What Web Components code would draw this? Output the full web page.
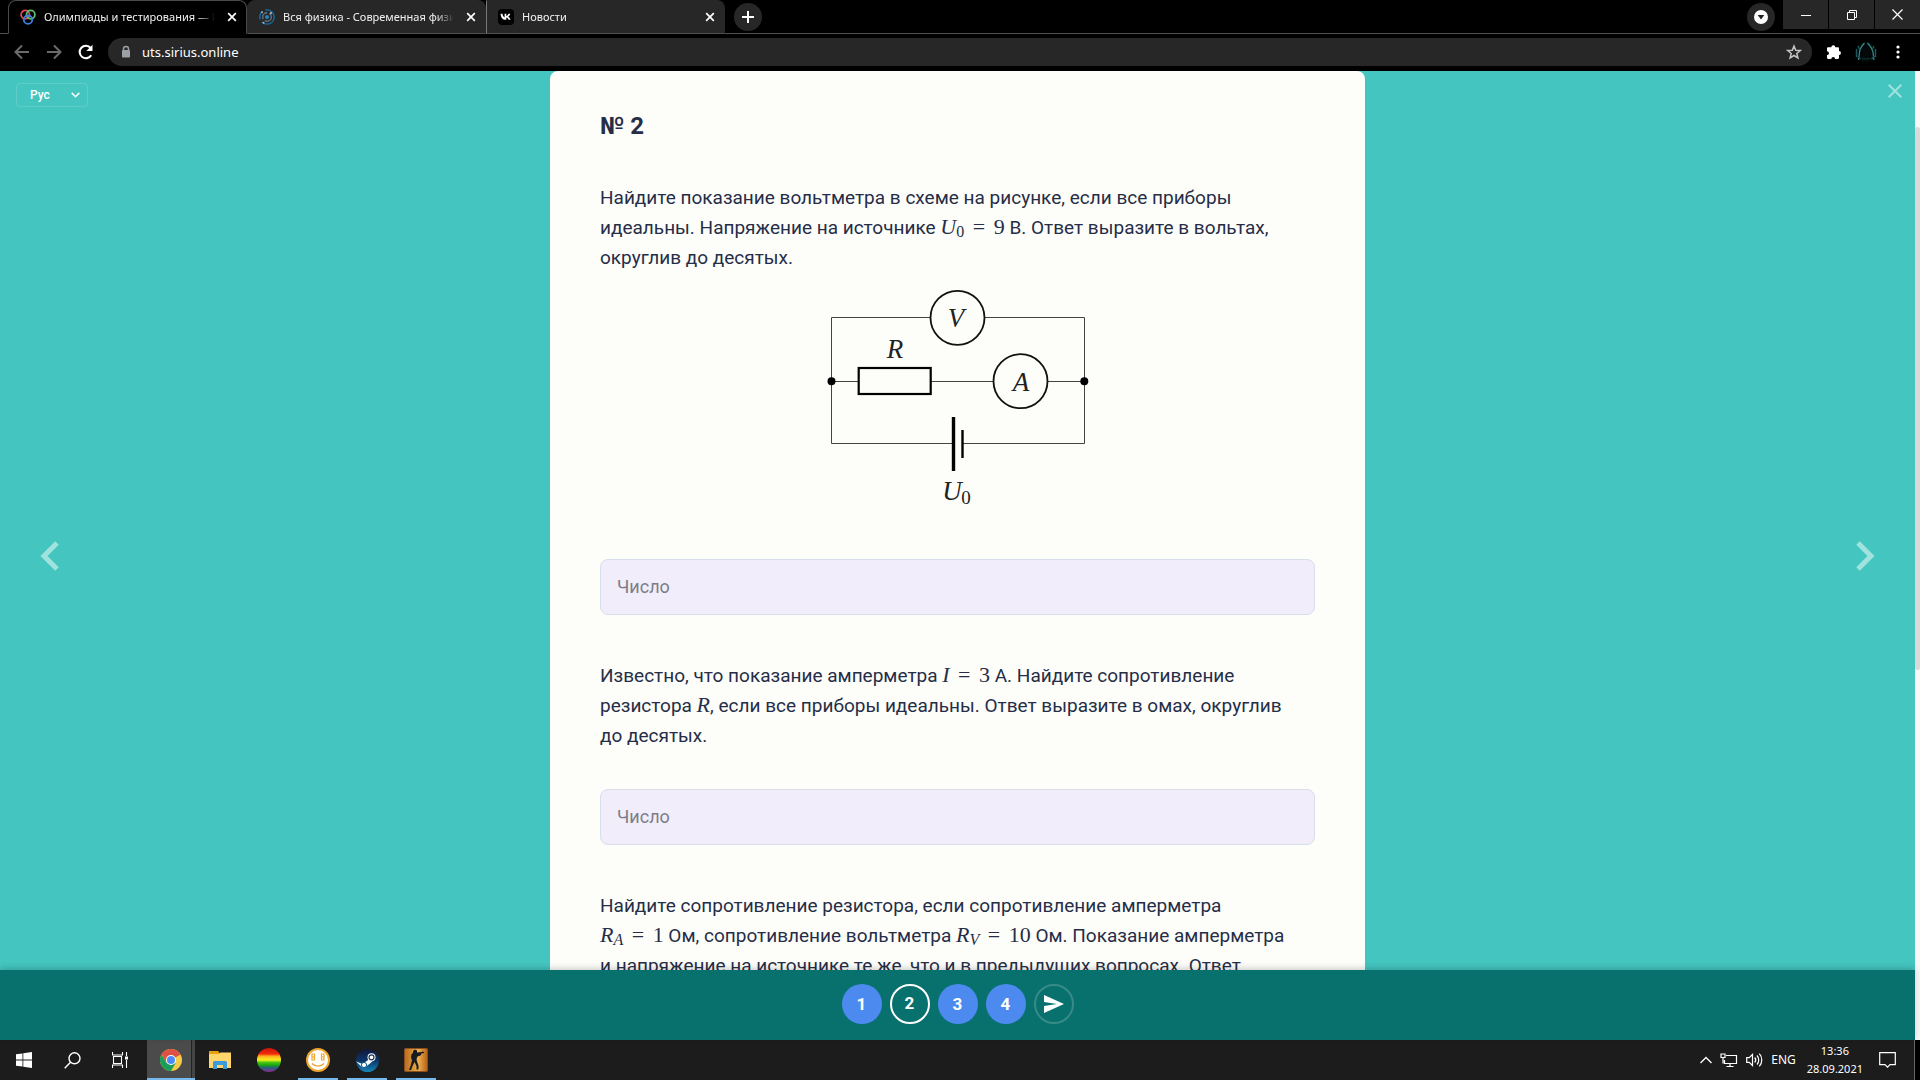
<!DOCTYPE html>
<html lang="ru">
<head>
<meta charset="utf-8">
<title>Олимпиады и тестирования</title>
<style>
html, body { height: 100%; margin: 0; }
body { background: #000; font-family: Roboto, "Liberation Sans", sans-serif; overflow: hidden; }
</style>
</head>
<body>
<desktop-shell></desktop-shell>
<script>
const define = (name, css, html) => {
  const template = document.createElement('template');
  template.innerHTML = `<style>*,*::before,*::after{box-sizing:border-box}button{font:inherit;color:inherit;border:0;padding:0;margin:0;background:none;display:flex;align-items:center;justify-content:center}svg{display:block;flex:none}${css}</style>${html}`;
  customElements.define(name, class extends HTMLElement {
    constructor() {
      super();
      this.attachShadow({ mode: 'open' }).append(template.content.cloneNode(true));
    }
  });
};

/* ---------- browser window ---------- */
define('browser-tab', `
  :host { display: flex; align-items: center; gap: 8px; flex: 0 1 239px; min-width: 0; height: 34px; padding: 0 6px 0 11px; background: #272727; border-radius: 8px 8px 0 0; color: #f1f1f1; font: 11px/16px "Noto Sans", "Open Sans", sans-serif; border: 1px solid #272727; border-bottom: 1px solid #505050; }
  :host([active]) { background: #000; border-color: #4a4a4a; border-bottom-color: #000; }
  :host([divided]) { border-top-left-radius: 0; border-left-color: #777; }
  .title { flex: 1; min-width: 0; overflow: hidden; white-space: nowrap; -webkit-mask-image: linear-gradient(to right, #000 calc(100% - 22px), transparent calc(100% - 4px)); }
  button { width: 16px; height: 16px; margin-left: -3px; }
`, `<slot name="icon"></slot><span class="title"><slot></slot></span>
  <button aria-label="Закрыть вкладку"><svg width="10" height="10" viewBox="0 0 10 10" fill="none" stroke="#fff" stroke-width="1.7"><path d="M1.2 1.2l7.6 7.6M8.8 1.2L1.2 8.8"/></svg></button>`);

define('tab-strip', `
  :host { display: flex; height: 34px; background: #000; border-bottom: 1px solid #505050; padding-left: 8px; }
  .tabs { display: flex; flex: 0 1 718px; min-width: 0; }
  .round { width: 28px; height: 28px; border-radius: 50%; background: #272727; margin: 3px 8px; flex: none; }
  .fill { flex: 1; }
  .window { display: flex; gap: 1px; }
  .window button { width: 45px; height: 29px; background: #272727; }
`, `
  <div class="tabs">
    <browser-tab active>
      <svg slot="icon" width="16" height="16" viewBox="0 0 16 16" fill="none" stroke-width="1.8"><circle cx="5.3" cy="5.6" r="4.2" stroke="#e8475a"/><circle cx="10.7" cy="5.6" r="4.2" stroke="#5ec26a"/><circle cx="8" cy="10.7" r="4.2" stroke="#3f7fe0"/></svg>
      Олимпиады и тестирования — Р</browser-tab>
    <browser-tab>
      <svg slot="icon" width="16" height="16" viewBox="0 0 16 16" fill="none"><circle cx="8" cy="8" r="7.2" stroke="#1670ab" stroke-width="1.3" stroke-dasharray="17 3 9 3"/><circle cx="8" cy="8" r="4.3" stroke="#667180" stroke-width="1.4" stroke-dasharray="9 2"/><circle cx="8" cy="8" r="2" fill="#1f87c4"/><circle cx="3" cy="3.2" r="1" fill="#aaa"/><circle cx="12" cy="4" r="1" fill="#ccc"/><circle cx="4.5" cy="13.8" r="1" fill="#aaa"/></svg>
      Вся физика - Современная физи</browser-tab>
    <browser-tab divided>
      <svg slot="icon" width="16" height="16" viewBox="0 0 16 16"><rect width="16" height="16" rx="4" fill="#000"/><path d="M2.6 4.7h1.8c.3 2.3 1.4 3.4 2.2 3.7v-3.7h1.7v2.2c.9-.1 1.8-1 2.2-2.2h1.8c-.3 1.4-1.2 2.5-2.1 3 .9.5 1.9 1.4 2.4 3.1h-1.9c-.4-1.2-1.3-2.2-2.4-2.3v2.3h-.3c-3.400 0-5.300-2.300-5.400-6.100z" fill="#fff"/></svg>
      Новости</browser-tab>
  </div>
  <button class="round" aria-label="Новая вкладка"><svg width="12" height="12" viewBox="0 0 12 12" stroke="#fff" stroke-width="2"><path d="M6 0v12M0 6h12"/></svg></button>
  <span class="fill"></span>
  <button class="round" aria-label="Поиск вкладок"><svg width="14" height="14" viewBox="0 0 14 14"><circle cx="7" cy="7" r="7" fill="#fff"/><path d="M3.7 5h6.600L7 9.500z" fill="#202020"/></svg></button>
  <div class="window">
    <button aria-label="Свернуть"><svg width="10" height="10" stroke="#fff"><path d="M0 5.500h10"/></svg></button>
    <button aria-label="Восстановить"><svg width="10" height="10" fill="none" stroke="#fff"><path d="M.5 2.500h7v7h-7zM2.500 2.500v-2h7v7h-2"/></svg></button>
    <button aria-label="Закрыть"><svg width="11" height="11" fill="none" stroke="#fff" stroke-width="1.200"><path d="M.5 .5l10 10M10.500 .5l-10 10"/></svg></button>
  </div>`);

define('browser-toolbar', `
  :host { display: flex; align-items: center; gap: 4px; height: 37px; padding: 0 8px 1px; background: #000; }
  button { width: 28px; height: 28px; flex: none; }
  .address { display: flex; flex: 1; min-width: 0; align-items: center; height: 28px; margin: 0 4px; padding: 0 4px 0 12px; border-radius: 14px; background: #272727; }
  input { flex: 1; min-width: 0; border: 0; outline: 0; background: none; padding: 0 0 0 10px; color: #fff; font: 13px/20px "Noto Sans", "Open Sans", sans-serif; }
`, `
  <button aria-label="Назад"><svg width="16" height="16" fill="none" stroke="#6b6b6b" stroke-width="2"><path d="M15 8H2M8 1.500L1.500 8 8 14.500"/></svg></button>
  <button aria-label="Вперёд"><svg width="16" height="16" fill="none" stroke="#6b6b6b" stroke-width="2"><path d="M1 8h13M8 1.500L14.500 8 8 14.500"/></svg></button>
  <button aria-label="Обновить"><svg width="16" height="16" fill="none"><path d="M13.200 11.200A6.200 6.200 0 1 1 12.600 4" stroke="#fff" stroke-width="2.100"/><path d="M14.500 .8v6.200H8.300z" fill="#fff"/></svg></button>
  <div class="address">
    <svg width="12" height="14" viewBox="0 0 12 14"><path d="M3.500 6V4a2.500 2.500 0 0 1 5 0v2" fill="none" stroke="#9aa0a6" stroke-width="1.500"/><rect x="2" y="5" width="8" height="7.500" rx="1" fill="#9aa0a6"/></svg>
    <input aria-label="Адрес" value="uts.sirius.online">
    <button aria-label="В закладки"><svg width="16" height="16" viewBox="0 0 16 16" fill="none" stroke="#c4c4c4" stroke-width="1.500"><path d="M8 2l1.700 4.200 4.600.3-3.500 3 1.100 4.400L8 11.500l-3.900 2.400 1.100-4.400-3.500-3 4.600-.3z"/></svg></button>
  </div>
  <button aria-label="Расширения"><svg width="16" height="16" viewBox="0 0 16 16" fill="#fff"><path d="M5.300 3.200a2 2 0 0 1 4 0h2.500c.7 0 1.200.5 1.200 1.200V7a1.900 1.900 0 0 1 0 3.900v2.900c0 .7-.5 1.200-1.200 1.200H9.100a1.900 1.900 0 0 0-3.800 0H2.200c-.7 0-1.200-.5-1.200-1.200v-2.700a1.900 1.900 0 0 0 0-3.900V4.400c0-.7.5-1.200 1.200-1.200z"/></svg></button>
  <button aria-label="Профиль"><svg width="22" height="22" viewBox="0 0 22 22" fill="none"><circle cx="11" cy="11" r="10.500" fill="#030909"/><path d="M9.500 2C7 4.500 4.800 8 4.400 12L3.500 19M12.500 2c2.500 2.500 5 6 5.600 10l.9 7" stroke="#3b8e93" stroke-width="1.200"/><path d="M1.500 8v8M3 5l2 4M20.500 8v8M19 5l-2 4M2.500 16l3 2M19.500 15l-3 3" stroke="#1d5a5d" stroke-width="1.400"/><path d="M7 17.500c2.500.6 5.500.6 8 0" stroke="#123a3c"/></svg></button>
  <button aria-label="Меню"><svg width="4" height="14" fill="#fff"><circle cx="2" cy="2" r="1.600"/><circle cx="2" cy="7" r="1.600"/><circle cx="2" cy="12" r="1.600"/></svg></button>`);

/* ---------- test page ---------- */
define('math-expr', `
  :host { white-space: nowrap; font: 22px/22px "Liberation Serif", serif; }
  ::slotted(sub) { font-size: 16px; line-height: 16px; vertical-align: -3px; }
  ::slotted(.eq) { margin: 0 3px; }
`, `<slot></slot>`);

define('circuit-diagram', `
  :host { display: flex; justify-content: center; }
  text { font: italic 27px "Liberation Serif", serif; fill: #222; text-anchor: middle; }
  .index { font: 19px "Liberation Serif", serif; }
`, `
  <svg width="301" height="248" viewBox="0 1 301 248" fill="none" stroke="#111" role="img" aria-label="Схема электрической цепи">
    <path stroke="#444" d="M24.500 45.500h253v126h-253zM24.500 109.500h253"/>
    <circle cx="150.500" cy="45.800" r="27" fill="#fdfefa" stroke-width="1.800"/>
    <circle cx="213.500" cy="109.200" r="27" fill="#fdfefa" stroke-width="1.800"/>
    <rect x="51.700" y="96" width="72" height="26" fill="#fdfefa" stroke="#000" stroke-width="2.200"/>
    <circle cx="24.500" cy="109.200" r="4" fill="#000" stroke="none"/><circle cx="277.300" cy="109.200" r="4" fill="#000" stroke="none"/>
    <path stroke="#fdfefa" stroke-width="3" d="M147.500 171.500h8"/>
    <path stroke="#000" stroke-width="3.400" d="M146.500 145v54"/><path stroke="#000" stroke-width="2.400" d="M155.500 158v28"/>
    <g stroke="none"><text x="149" y="55">V</text><text x="88" y="86">R</text><text x="214" y="119">A</text><text x="145" y="228">U</text><text class="index" x="159" y="232">0</text></g>
  </svg>`);

define('answer-field', `
  :host { display: block; }
  input { display: block; width: 100%; height: 56px; padding: 0 16px 2px; border: 1px solid #d8deea; border-radius: 8px; background: #f1edfb; color: #262d47; font: 18px/24px Roboto, sans-serif; outline: 0; }
  input::placeholder { color: #7d7d85; opacity: 1; }
`, `<input type="text" inputmode="decimal" placeholder="Число" aria-label="Ответ">`);

define('task-question', `
  :host { display: flex; flex-direction: column; gap: 38px; }
  p { margin: 0; padding-right: 16px; font-size: 19px; line-height: 30px; color: #262d47; }
`, `<div><p><slot></slot></p><slot name="figure"></slot></div><slot name="answer"></slot>`);

define('task-card', `
  :host { display: flex; flex-direction: column; gap: 46px; padding: 40px 50px; background: #fdfefa; border-radius: 8px 8px 0 0; }
  h1 { margin: 0 0 -4px; font-size: 24px; line-height: 30px; font-weight: 700; color: #262d47; }
`, `
  <h1>№ 2</h1>
  <task-question>Найдите показание вольтметра в схеме на рисунке, если все приборы идеальны. Напряжение на источнике <math-expr><i>U</i><sub>0</sub> <span class="eq">=</span> 9</math-expr> В. Ответ выразите в вольтах, округлив до десятых.
    <circuit-diagram slot="figure"></circuit-diagram><answer-field slot="answer"></answer-field></task-question>
  <task-question>Известно, что показание амперметра <math-expr><i>I</i> <span class="eq">=</span> 3</math-expr> А. Найдите сопротивление резистора <math-expr><i>R</i></math-expr>, если все приборы идеальны. Ответ выразите в омах, округлив до десятых.
    <answer-field slot="answer"></answer-field></task-question>
  <task-question>Найдите сопротивление резистора, если сопротивление амперметра <math-expr><i>R</i><sub><i>A</i></sub> <span class="eq">=</span> 1</math-expr>&nbsp;Ом, сопротивление вольтметра <math-expr><i>R</i><sub><i>V</i></sub> <span class="eq">=</span> 10</math-expr>&nbsp;Ом. Показание амперметра и&nbsp;напряжение на источнике те же, что и в предыдущих вопросах. Ответ</task-question>`);

define('language-select', `
  :host { display: flex; align-items: center; width: 72px; height: 24px; border: 1px solid rgba(255,255,255,.14); border-radius: 4px; }
  select { appearance: none; flex: 1; min-width: 0; height: 22px; border: 0; background: none; padding: 0 0 0 13px; color: #fff; font: 500 12px/16px Roboto, sans-serif; outline: 0; }
  svg { margin-right: 7px; pointer-events: none; }
`, `<select aria-label="Язык"><option>Рус</option></select><svg width="9" height="6" fill="none" stroke="#fff" stroke-width="1.500"><path d="M.7 .9l3.800 3.800L8.300 .9"/></svg>`);

define('task-nav', `
  :host { display: flex; justify-content: center; gap: 8px; height: 70px; padding-top: 14px; background: #08716d; box-shadow: 0 -2px 6px rgba(0,0,0,.18); position: relative; }
  button { width: 40px; height: 40px; border-radius: 50%; background: #4d8af0; color: #fff; font: 700 17px/20px Roboto, sans-serif; }
  button[aria-current] { background: none; border: 2px solid #fff; padding-bottom: 2px; }
  .send { background: none; border: 2px solid #378b87; }
`, `
  <button>1</button><button aria-current="page">2</button><button>3</button><button>4</button>
  <button class="send" aria-label="Отправить"><svg width="20" height="18" fill="#fff"><path d="M0 0l20 9L0 18v-7l13-2L0 7z"/></svg></button>`);

define('test-page', `
  :host { display: flex; flex: 1; min-height: 0; background: #f8f8f8; }
  .view { position: relative; display: flex; flex-direction: column; flex: 1; min-width: 0; background: #44c5c0; }
  .stage { display: grid; grid-template-columns: 1fr minmax(0, 815px) 1fr; flex: 1; min-height: 0; overflow: hidden; }
  .side { display: flex; flex-direction: column; justify-content: space-between; align-items: flex-start; padding: 12px 16px 8px; }
  .side.right { align-items: flex-end; padding: 13px 13px 0 0; }
  time { color: #fff; font-size: 18px; line-height: 24px; font-weight: 500; text-shadow: 0 1px 6px rgba(0,0,0,.4); white-space: nowrap; }
  .arrow { position: absolute; top: 50%; margin-top: -15px; }
  .prev { left: 40px; } .next { right: 40px; }
  .scroll { width: 5px; padding-top: 56px; }
  .thumb { height: 543px; border-radius: 3px; background: #d9d9d9; }
`, `
  <div class="view">
    <div class="stage">
      <div class="side"><language-select></language-select><time>00 ч 35 мин</time></div>
      <task-card></task-card>
      <div class="side right"><button aria-label="Закрыть"><svg width="14" height="14" stroke="#a1e2df" stroke-width="2"><path d="M.7 .7l12.600 12.600M13.300 .7L.7 13.300"/></svg></button></div>
    </div>
    <task-nav></task-nav>
    <button class="arrow prev" aria-label="Предыдущее"><svg width="19" height="30" fill="none" stroke="#a1e2df" stroke-width="5"><path d="M17 2L4 15l13 13"/></svg></button>
    <button class="arrow next" aria-label="Следующее"><svg width="19" height="30" fill="none" stroke="#a1e2df" stroke-width="5"><path d="M2 2l13 13L2 28"/></svg></button>
  </div>
  <div class="scroll"><div class="thumb"></div></div>`);

/* ---------- taskbar ---------- */
define('taskbar-app', `
  :host { display: flex; flex: 0 0 48px; height: 40px; }
  button { width: 48px; height: 40px; }
  :host([running]) button { background: linear-gradient(#76b9ed, #76b9ed) center bottom / 40px 2px no-repeat; }
  :host([active]) button { background: linear-gradient(#76b9ed, #76b9ed) center bottom / 48px 2px no-repeat, linear-gradient(to right, #4b4b4b 44px, #242424 44px, #242424 45px, #444 45px); }
`, `<button><slot></slot></button>`);

define('system-taskbar', `
  :host { display: flex; align-items: center; height: 40px; padding-right: 5px; background: #000; color: #fff; font: 11px/18px "Noto Sans", "Open Sans", sans-serif; }
  .bar { display: flex; flex: 1; min-width: 0; height: 40px; align-items: center; background: #1c1c1c; border-right: 1px solid #666; }
  .system { display: flex; padding-right: 3px; }
  .apps { display: flex; gap: 1px; }
  .fill { flex: 1; }
  .tray { display: flex; align-items: center; gap: 8px; padding-right: 18px; }
  .lang { padding-right: 3px; font-size: 12px; }
  .clock { text-align: center; padding-right: 8px; }
`, `
  <div class="bar">
    <div class="system">
      <taskbar-app aria-label="Пуск"><svg width="16" height="16" fill="#fff"><path d="M0 2.300L6.500 1.400v6.200H0zM7.300 1.300L16 0v7.600H7.300zM0 8.400h6.500v6.200L0 13.700zM7.300 8.400H16V16l-8.700-1.300z"/></svg></taskbar-app>
      <taskbar-app aria-label="Поиск"><svg width="17" height="17" fill="none" stroke="#fff" stroke-width="1.400"><circle cx="10.500" cy="6.300" r="5.500"/><path d="M6.500 10.300L.7 16.200"/></svg></taskbar-app>
      <taskbar-app aria-label="Представление задач"><svg width="17" height="16" fill="none" stroke="#fff" stroke-width="1.100"><path d="M.5 0v3h10V0M.5 16v-3h10v3M1.500 4.500h8v7h-8zM14.500 0v4M14.500 8v8"/><path d="M13 4.500h3v3h-3z" fill="#fff" stroke="none"/></svg></taskbar-app>
    </div>
    <div class="apps">
      <taskbar-app active aria-label="Chrome"><svg width="22" height="22" viewBox="0 0 24 24"><circle cx="12" cy="12" r="12" fill="#f7cb4a"/><path d="M12 12L1.600 6A12 12 0 0 1 22.400 6z" fill="#dd5144"/><path d="M12 6h10.400L12 7zM1.600 6l5.200 9L12 12z" fill="#dd5144"/><path d="M1.600 6A12 12 0 0 0 12 24l5.200-9L12 16l-5.200-1z" fill="#1c9e5b"/><circle cx="12" cy="12" r="5.500" fill="#fff"/><circle cx="12" cy="12" r="4.400" fill="#4c8bf5"/></svg></taskbar-app>
      <taskbar-app aria-label="Проводник"><svg width="22" height="18" viewBox="0 0 22 18"><path d="M0 0h9l1.500 2H22v15H0z" fill="#e7a210"/><path d="M0 3h10l1.500-1.500H22V17H0z" fill="#ffd66b"/><path d="M4 18v-7l1-1h12l1 1v7h-4v-4H8v4z" fill="#3c9adf"/></svg></taskbar-app>
      <taskbar-app aria-label="Радуга"><svg width="24" height="24"><defs><linearGradient id="r" x2="0" y2="1"><stop stop-color="#c91408"/><stop offset=".25" stop-color="#f22c0c"/><stop offset=".34" stop-color="#ffae20"/><stop offset=".5" stop-color="#f8f01c"/><stop offset=".6" stop-color="#4bc814"/><stop offset=".72" stop-color="#1aa30e"/><stop offset=".82" stop-color="#256080"/><stop offset="1" stop-color="#8a2a8c"/></linearGradient></defs><circle cx="12" cy="12" r="12" fill="url(#r)"/></svg></taskbar-app>
      <taskbar-app running aria-label="Смайл"><svg width="24" height="24" fill="none" stroke="#eda52e"><circle cx="12" cy="12" r="11" fill="#fff" stroke-width="2"/><path d="M6 6h2.500v6H6zM6 9h2.500M15.500 6H18v6h-2.500zM15.500 9H18" stroke-width="1.200"/><path d="M6 15.500c3.300 3.500 8.700 3.500 12 0" stroke-width="1.400"/></svg></taskbar-app>
      <taskbar-app running aria-label="Steam"><svg width="23" height="23"><defs><linearGradient id="s" x2="0" y2="1"><stop stop-color="#13183b"/><stop offset=".5" stop-color="#0c3467"/><stop offset="1" stop-color="#1387b8"/></linearGradient></defs><circle cx="11.500" cy="11.500" r="11.500" fill="url(#s)"/><path d="M0 12.500L6.500 15 12 11l3-5 4 4-5 4.500-4.500 3.500-3 .5z" fill="#fff"/><circle cx="15.500" cy="8.300" r="4" fill="#fff"/><circle cx="15.500" cy="8.300" r="2.500" fill="#fff" stroke="#15315d" stroke-width="1.200"/><circle cx="8" cy="16" r="2.600" fill="#fff" stroke="#0e568b"/></svg></taskbar-app>
      <taskbar-app running aria-label="Counter-Strike"><svg width="24" height="24"><defs><linearGradient id="c"><stop stop-color="#b96a1c"/><stop offset=".6" stop-color="#f0b04c"/><stop offset="1" stop-color="#b15f19"/></linearGradient></defs><rect x=".5" y=".5" width="23" height="23" rx="1" fill="url(#c)" stroke="#8c5020"/><path d="M9 3l2-1.500 2 1v2l5-.5V3.500l2 .5v1l-2.500.5-1 2-3 1-1 2.500.5 2.500 1.500 4v4h-2v-3.500L10.500 14l-2 4-1.500 4H5l1.500-4 1.500-5.500-1-3L7.500 6 9 5z" fill="#171c20"/></svg></taskbar-app>
    </div>
    <span class="fill"></span>
    <div class="tray">
      <svg width="12" height="8" fill="none" stroke="#fff" stroke-width="1.300"><path d="M.5 7L6 1.500 11.500 7"/></svg>
      <svg width="18" height="15" fill="none" stroke="#fff" stroke-width="1.200"><path d="M6 2.500h10.500v8H4.500V7M10 10.500v3M6.500 13.500h7M1 1h4v3.500H1zM3 4.500v6"/></svg>
      <svg width="17" height="14" fill="none" stroke="#fff" stroke-width="1.200"><path d="M.7 4.700h2.500L6.500 1.500v11L3.200 9.300H.7zM8.700 4.500c1.300 1.500 1.300 3.500 0 5M11 2.500c2.300 2.500 2.300 6.500 0 9M13.300 .7c3.300 3.500 3.300 9 0 12.600"/></svg>
      <span class="lang">ENG</span>
      <div class="clock">13:36<br>28.09.2021</div>
      <svg width="17" height="16" fill="none" stroke="#fff" stroke-width="1.200"><path d="M.7 .7h15.600v12H11L8.500 15.200 6 12.700H.7z"/></svg>
    </div>
  </div>`);

define('desktop-shell', `:host { display: flex; flex-direction: column; height: 100vh; }`,
  `<tab-strip></tab-strip><browser-toolbar></browser-toolbar><test-page></test-page><system-taskbar></system-taskbar>`);
</script>
</body>
</html>
